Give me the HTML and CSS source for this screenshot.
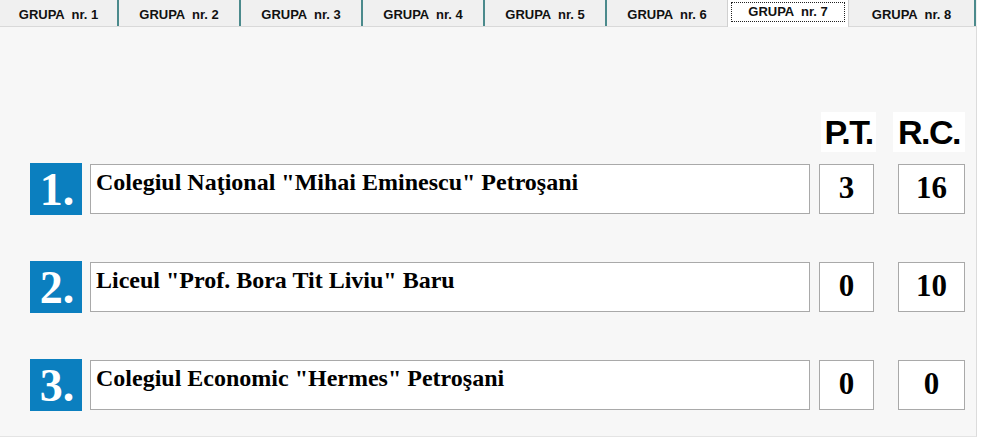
FILE: index.html
```html
<!DOCTYPE html>
<html>
<head>
<meta charset="utf-8">
<link rel="stylesheet" href="styles.css">
</head>
<body>
<div class="tabs">
  <div class="tab first">GRUPA  nr. 1</div>
  <div class="tab">GRUPA  nr. 2</div>
  <div class="tab">GRUPA  nr. 3</div>
  <div class="tab">GRUPA  nr. 4</div>
  <div class="tab">GRUPA  nr. 5</div>
  <div class="tab">GRUPA  nr. 6</div>
  <div class="tab active"><span class="focus">GRUPA  nr. 7</span></div>
  <div class="tab last">GRUPA  nr. 8</div>
</div>
<div class="panel">
  <div class="head">
    <div class="head-spacer"></div>
    <div class="label pt">P.T.</div>
    <div class="label rc">R.C.</div>
  </div>
  <div class="row">
    <div class="num">1.</div>
    <div class="name">Colegiul Naţional "Mihai Eminescu" Petroşani</div>
    <div class="score pt">3</div>
    <div class="score rc">16</div>
  </div>
  <div class="row">
    <div class="num">2.</div>
    <div class="name">Liceul "Prof. Bora Tit Liviu" Baru</div>
    <div class="score pt">0</div>
    <div class="score rc">10</div>
  </div>
  <div class="row">
    <div class="num">3.</div>
    <div class="name">Colegiul Economic "Hermes" Petroşani</div>
    <div class="score pt">0</div>
    <div class="score rc">0</div>
  </div>
</div>
</body>
</html>
```
FILE: styles.css
```css
* { box-sizing: border-box; }
html, body { margin: 0; padding: 0; background: #ffffff; }
body { width: 984px; height: 445px; overflow: hidden; }

.tabs {
  display: flex;
  width: 977px;
  height: 27px;
  background: #f0f0f0;
  border-bottom: 1px solid #d9d9d9;
}
.tab {
  width: 122px;
  height: 26px;
  border-right: 2px solid #4b8a8c;
  font-family: "Liberation Sans", Arial, sans-serif;
  font-weight: bold;
  font-size: 13px;
  color: #111;
  white-space: pre;
  display: flex;
  align-items: center;
  justify-content: center;
  padding-top: 2px;
}
.tab.first { width: 119px; }
.tab.active {
  background: #ffffff;
  border-right: 1px solid #d0d0d0;
  border-left: 1px solid #d0d0d0;
  margin-left: -2px;
  height: 27px;
  align-items: flex-start;
  padding-top: 2px;
}
.tab.active .focus {
  display: block;
  width: 114px;
  height: 20px;
  border: 1px dotted #222;
  text-align: center;
  line-height: 17px;
}
.tab.last { width: 127px; }

.panel {
  width: 977px;
  height: 410px;
  background: #f7f7f7;
  border-right: 1px solid #dcdcdc;
  border-bottom: 1px solid #e4e4e4;
  padding: 85px 0 0 30px;
}

.head {
  display: flex;
  height: 40px;
  margin-bottom: 11px;
}
.head-spacer { width: 791px; }
.label {
  background: #ffffff;
  font-family: "Liberation Sans", Arial, sans-serif;
  font-weight: bold;
  font-size: 34px;
  line-height: 40px;
  color: #000;
  letter-spacing: -1.5px;
}
.label.pt { width: 55px; text-align: center; }
.label.rc { width: 72px; margin-left: 17px; text-align: center; }

.row {
  display: flex;
  align-items: flex-start;
  height: 52px;
  margin-bottom: 46px;
}
.num {
  width: 52px;
  height: 52px;
  background: #0b7fbf;
  color: #ffffff;
  font-family: "Liberation Serif", "Times New Roman", serif;
  font-weight: bold;
  font-size: 46px;
  line-height: 54px;
  text-align: center;
  padding-left: 2px;
}
.name {
  margin-left: 8px;
  margin-top: 1px;
  width: 720px;
  height: 50px;
  background: #ffffff;
  border: 1px solid #a9a9a9;
  font-family: "Liberation Serif", "Times New Roman", serif;
  font-weight: bold;
  font-size: 24px;
  line-height: 34px;
  padding-left: 5px;
  color: #000;
}
.score {
  margin-top: 1px;
  height: 50px;
  background: #ffffff;
  border: 1px solid #a9a9a9;
  font-family: "Liberation Serif", "Times New Roman", serif;
  font-weight: bold;
  font-size: 31px;
  line-height: 46px;
  text-align: center;
  color: #000;
}
.score.pt { width: 55px; margin-left: 9px; }
.score.rc { width: 67px; margin-left: 24px; }
```
